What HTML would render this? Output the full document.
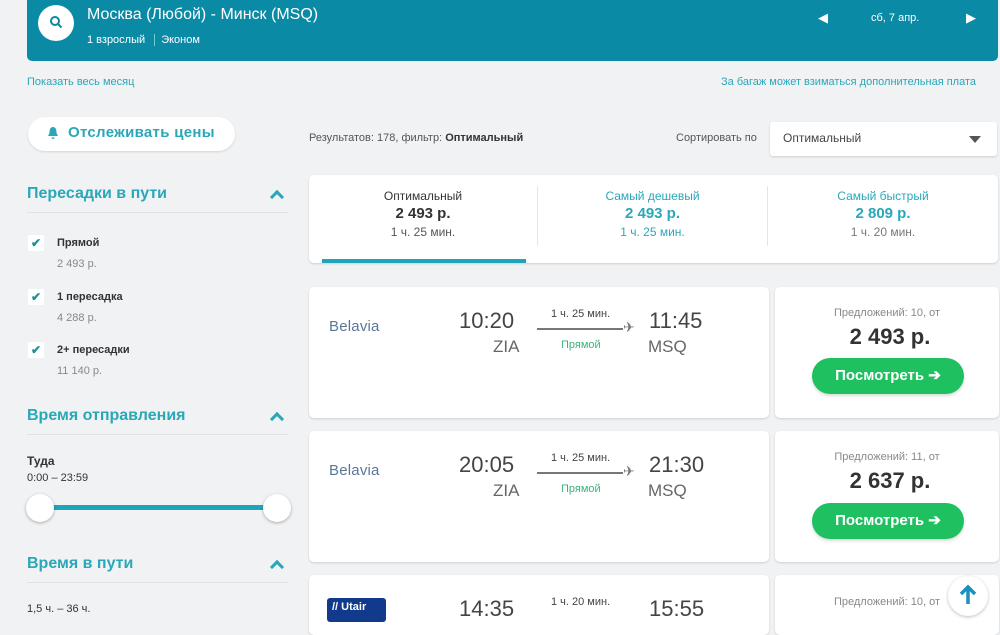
<!DOCTYPE html>
<html><head><meta charset="utf-8"><style>
*{box-sizing:border-box;margin:0;padding:0}
body{width:1000px;height:613px;overflow:hidden;background:#f1f2f4;font-family:"Liberation Sans",sans-serif;position:relative;color:#333}
.a{position:absolute}
.hdr{left:27px;top:0;width:971px;height:61px;background:#0b8aa5;border-radius:0 0 5px 5px}
.teal{color:#2aa7b8}
.card{background:#fff;border-radius:5px;box-shadow:0 1px 2px rgba(0,0,0,.15)}
.h2{font-size:16px;font-weight:bold;color:#2aa7b8}
.chev{width:10px;height:10px;border-left:3px solid #2aa7b8;border-top:3px solid #2aa7b8;transform:rotate(45deg)}
.line{height:1px;background:#e0e2e5}
.cb{width:16px;height:16px;background:#fff;border-radius:2px;color:#1c8f9c;font-size:12px;text-align:center;line-height:16px;font-weight:bold}
.t{font-size:22px;color:#444}
.ap{font-size:17px;color:#666}
.btn{background:#1fc060;border-radius:18px;color:#fff;font-weight:bold;font-size:15px;text-align:center;line-height:36px;width:152px;height:36px;box-shadow:0 2px 3px rgba(0,0,0,.15)}
.bel{font-size:15px;color:#5a7896;letter-spacing:.2px}
</style></head><body>
<div class="a hdr"></div>
<div class="a" style="left:38px;top:5px;width:36px;height:36px;border-radius:50%;background:#fff"></div>
<svg class="a" style="left:49px;top:15px" width="14" height="14" viewBox="0 0 14 14"><circle cx="6" cy="6" r="4" stroke="#0b8aa5" stroke-width="2" fill="none"/><path d="M9 9l3.5 3.5" stroke="#0b8aa5" stroke-width="2"/></svg>
<div class="a" style="left:87px;top:6px;font-size:16px;color:#fff">Москва (Любой) - Минск (MSQ)</div>
<div class="a" style="left:87px;top:34px;font-size:11px;color:#fff">1 взрослый <span style="border-left:1px solid #7cc;margin:0 6px"></span>Эконом</div>
<div class="a" style="left:818px;top:10px;color:#fff;font-size:13px">◀</div>
<div class="a" style="left:871px;top:12px;color:#fff;font-size:11px">сб, 7 апр.</div>
<div class="a" style="left:966px;top:10px;color:#fff;font-size:13px">▶</div>
<div class="a teal" style="left:27px;top:76px;font-size:11px">Показать весь месяц</div>
<div class="a teal" style="left:721px;top:76px;font-size:11px;white-space:nowrap">За багаж может взиматься дополнительная плата</div>

<div class="a" style="left:28px;top:117px;width:207px;height:34px;background:#fff;border-radius:17px;box-shadow:0 1px 2px rgba(0,0,0,.12)"></div>
<svg class="a" style="left:47px;top:126px" width="12" height="14" viewBox="0 0 12 14"><path d="M6 1c-3 0-3.5 3-3.5 6L1 10h10L9.5 7C9.5 4 9 1 6 1zM4.5 11.5h3a1.5 1.5 0 0 1-3 0z" fill="#2aa7b8"/></svg>
<div class="a teal" style="left:68px;top:124px;font-size:15px;font-weight:bold;letter-spacing:.3px">Отслеживать цены</div>

<div class="a h2" style="left:27px;top:185px">Пересадки в пути</div>
<div class="a chev" style="left:272px;top:192px"></div>
<div class="a line" style="left:27px;top:212px;width:261px"></div>
<div class="a cb" style="left:28px;top:235px">✔</div><div class="a" style="left:57px;top:237px;font-size:11px;font-weight:bold">Прямой</div><div class="a" style="left:57px;top:258px;font-size:11px;color:#888">2 493 р.</div>
<div class="a cb" style="left:28px;top:289px">✔</div><div class="a" style="left:57px;top:291px;font-size:11px;font-weight:bold">1 пересадка</div><div class="a" style="left:57px;top:312px;font-size:11px;color:#888">4 288 р.</div>
<div class="a cb" style="left:28px;top:342px">✔</div><div class="a" style="left:57px;top:344px;font-size:11px;font-weight:bold">2+ пересадки</div><div class="a" style="left:57px;top:365px;font-size:11px;color:#888">11 140 р.</div>

<div class="a h2" style="left:27px;top:407px">Время отправления</div>
<div class="a chev" style="left:272px;top:414px"></div>
<div class="a line" style="left:27px;top:434px;width:261px"></div>
<div class="a" style="left:27px;top:454px;font-size:12px;font-weight:bold">Туда</div>
<div class="a" style="left:27px;top:472px;font-size:11px">0:00 – 23:59</div>
<div class="a" style="left:40px;top:505px;width:238px;height:5px;background:#1ea5bd"></div>
<div class="a" style="left:26px;top:494px;width:28px;height:28px;border-radius:50%;background:#fff;box-shadow:0 1px 3px rgba(0,0,0,.3)"></div>
<div class="a" style="left:263px;top:494px;width:28px;height:28px;border-radius:50%;background:#fff;box-shadow:0 1px 3px rgba(0,0,0,.3)"></div>
<div class="a h2" style="left:27px;top:555px">Время в пути</div>
<div class="a chev" style="left:272px;top:562px"></div>
<div class="a line" style="left:27px;top:582px;width:261px"></div>
<div class="a" style="left:27px;top:603px;font-size:11px">1,5 ч. – 36 ч.</div>

<div class="a" style="left:309px;top:132px;font-size:11px;color:#555">Результатов: 178, фильтр: <b style="color:#333">Оптимальный</b></div>
<div class="a" style="left:676px;top:132px;font-size:11px;color:#555">Сортировать по</div>
<div class="a card" style="left:770px;top:122px;width:227px;height:34px;border-radius:3px"></div>
<div class="a" style="left:783px;top:131px;font-size:12px;color:#444">Оптимальный</div>
<div class="a" style="left:969px;top:136px;border:6px solid transparent;border-top:7px solid #555"></div>

<div class="a card" style="left:309px;top:175px;width:689px;height:88px"></div>
<div class="a" style="left:537px;top:186px;width:1px;height:60px;background:#e5e5e5"></div>
<div class="a" style="left:767px;top:186px;width:1px;height:60px;background:#e5e5e5"></div>
<div class="a" style="left:322px;top:259px;width:204px;height:4px;background:#1ea5bd"></div>
<div class="a" style="left:309px;top:189px;width:228px;text-align:center;font-size:12px;color:#333">Оптимальный<br><b style="font-size:15px;line-height:22px">2 493 р.</b><br><span style="color:#555">1 ч. 25 мин.</span></div>
<div class="a teal" style="left:538px;top:189px;width:229px;text-align:center;font-size:12px">Самый дешевый<br><b style="font-size:15px;line-height:22px">2 493 р.</b><br><span>1 ч. 25 мин.</span></div>
<div class="a teal" style="left:768px;top:189px;width:230px;text-align:center;font-size:12px">Самый быстрый<br><b style="font-size:15px;line-height:22px">2 809 р.</b><br><span style="color:#777">1 ч. 20 мин.</span></div>

<!-- card 1 -->
<div class="a card" style="left:309px;top:287px;width:460px;height:131px"></div>
<div class="a card" style="left:775px;top:287px;width:224px;height:131px"></div>
<div class="a bel" style="left:329px;top:318px">Belavia</div>
<div class="a t" style="left:459px;top:308px">10:20</div><div class="a ap" style="left:493px;top:337px">ZIA</div>
<div class="a" style="left:551px;top:308px;font-size:11px;color:#444">1 ч. 25 мин.</div>
<div class="a" style="left:537px;top:328px;width:86px;height:2px;background:#777"></div><div class="a" style="left:623px;top:319px;font-size:14px;color:#777">✈</div>
<div class="a" style="left:561px;top:339px;font-size:11px;color:#3bb37a">Прямой</div>
<div class="a t" style="left:649px;top:308px">11:45</div><div class="a ap" style="left:648px;top:337px">MSQ</div>
<div class="a" style="left:775px;top:307px;width:224px;text-align:center;font-size:11px;color:#888">Предложений: 10, от</div>
<div class="a" style="left:775px;top:324px;width:230px;text-align:center;font-size:22px;font-weight:bold;color:#333">2 493 р.</div>
<div class="a btn" style="left:812px;top:358px">Посмотреть ➔</div>

<!-- card 2 -->
<div class="a card" style="left:309px;top:431px;width:460px;height:131px"></div>
<div class="a card" style="left:775px;top:431px;width:224px;height:131px"></div>
<div class="a bel" style="left:329px;top:462px">Belavia</div>
<div class="a t" style="left:459px;top:452px">20:05</div><div class="a ap" style="left:493px;top:481px">ZIA</div>
<div class="a" style="left:551px;top:452px;font-size:11px;color:#444">1 ч. 25 мин.</div>
<div class="a" style="left:537px;top:472px;width:86px;height:2px;background:#777"></div><div class="a" style="left:623px;top:463px;font-size:14px;color:#777">✈</div>
<div class="a" style="left:561px;top:483px;font-size:11px;color:#3bb37a">Прямой</div>
<div class="a t" style="left:649px;top:452px">21:30</div><div class="a ap" style="left:648px;top:481px">MSQ</div>
<div class="a" style="left:775px;top:451px;width:224px;text-align:center;font-size:11px;color:#888">Предложений: 11, от</div>
<div class="a" style="left:775px;top:468px;width:230px;text-align:center;font-size:22px;font-weight:bold;color:#333">2 637 р.</div>
<div class="a btn" style="left:812px;top:503px">Посмотреть ➔</div>

<!-- card 3 -->
<div class="a card" style="left:309px;top:575px;width:460px;height:60px"></div>
<div class="a card" style="left:775px;top:575px;width:224px;height:60px"></div>
<div class="a" style="left:327px;top:598px;width:59px;height:24px;background:#123a8c;border-radius:3px;color:#fff;font-size:11px;font-weight:bold;padding:3px 5px">// Utair</div>
<div class="a t" style="left:459px;top:596px">14:35</div>
<div class="a" style="left:551px;top:596px;font-size:11px;color:#444">1 ч. 20 мин.</div>
<div class="a t" style="left:649px;top:596px">15:55</div>
<div class="a" style="left:775px;top:596px;width:224px;text-align:center;font-size:11px;color:#888">Предложений: 10, от</div>
<div class="a" style="left:948px;top:576px;width:40px;height:40px;border-radius:50%;background:#fff;box-shadow:0 1px 3px rgba(0,0,0,.25)"></div>
<svg class="a" style="left:958px;top:584px" width="20" height="22" viewBox="0 0 20 22"><path d="M10 20V4M3 10l7-7 7 7" stroke="#1a8fc0" stroke-width="3.5" fill="none"/></svg>
</body></html>
